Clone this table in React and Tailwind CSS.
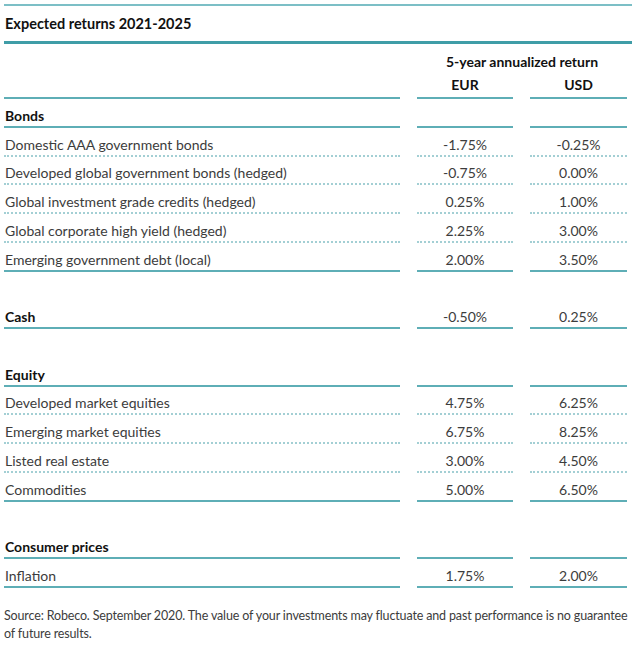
const sections = [
  {
    title: "Bonds",
    spacer: false,
    rows: [
      ["Domestic AAA government bonds", "-1.75%", "-0.25%"],
      ["Developed global government bonds (hedged)", "-0.75%", "0.00%"],
      ["Global investment grade credits (hedged)", "0.25%", "1.00%"],
      ["Global corporate high yield (hedged)", "2.25%", "3.00%"],
      ["Emerging government debt (local)", "2.00%", "3.50%"],
    ],
  },
  {
    title: "Cash",
    spacer: true,
    values: ["-0.50%", "0.25%"],
    rows: [],
  },
  {
    title: "Equity",
    spacer: true,
    rows: [
      ["Developed market equities", "4.75%", "6.25%"],
      ["Emerging market equities", "6.75%", "8.25%"],
      ["Listed real estate", "3.00%", "4.50%"],
      ["Commodities", "5.00%", "6.50%"],
    ],
  },
  {
    title: "Consumer prices",
    spacer: true,
    rows: [["Inflation", "1.75%", "2.00%"]],
  },
];

const solid = "border-b-2 border-solid border-[#5eaeb6]";
const dotted = "border-b-2 border-dotted border-[#a3cfd4]";

const Row = ({ cells, bold, line }) => (
  <div className="grid grid-cols-[396px_96px_97px] gap-x-[17px]">
    {cells.map((c, i) => (
      <div
        key={i}
        className={`h-[28.75px] flex items-end leading-[20px] ${line} ${
          i === 0 ? "pl-px" : "justify-center"
        } ${bold && i === 0 ? "font-bold text-[#111]" : "text-[#3c3c3c]"}`}
      >
        {c}
      </div>
    ))}
  </div>
);

const App = () => {
  return (
    <div
      className="bg-white w-[641px] h-[647px] pt-[4px] pl-[4px]"
      style={{ fontFamily: "Lato, 'Open Sans', sans-serif" }}
    >
      <div className="w-[628px] border-t-2 border-[#7cbfc6]">
        <h1 className="h-[35px] flex items-center pl-px font-bold text-[14.5px] text-[#111]">
          Expected returns 2021-2025
        </h1>
        <div className="border-t-[3px] border-[#3f9da7]" />
      </div>
      <div className="w-[623px] text-[14px]">
        <div className="grid grid-cols-[396px_96px_97px] gap-x-[17px]">
          <div className={`h-[55px] ${solid}`} />
          <div className={`h-[55px] col-span-2 relative ${solid}`}>
            <div className="absolute inset-x-0 top-[8px] text-center font-bold text-[#111] leading-[20px]">
              5-year annualized return
            </div>
            <div className="absolute inset-x-0 top-[31px] flex justify-between font-bold text-[#111] leading-[20px]">
              <span className="w-[96px] text-center">EUR</span>
              <span className="w-[97px] text-center">USD</span>
            </div>
            <div className="absolute left-[96px] w-[17px] -bottom-[2px] h-[2px] bg-white" />
          </div>
        </div>
        {sections.map((s) => (
          <div key={s.title}>
            {s.spacer && <div className="h-[28.75px]" />}
            <Row
              cells={[s.title, ...(s.values || ["", ""])]}
              bold
              line={solid}
            />
            {s.rows.map((r, i) => (
              <Row
                key={r[0]}
                cells={r}
                line={i === s.rows.length - 1 ? solid : dotted}
              />
            ))}
          </div>
        ))}
        <p className="mt-[19px] text-[12.5px] tracking-[-0.15px] leading-[18px] text-[#3c3c3c] w-[632px]">
          Source: Robeco. September 2020. The value of your investments may
          fluctuate and past performance is no guarantee of future results.
        </p>
      </div>
    </div>
  );
};

export default App;
